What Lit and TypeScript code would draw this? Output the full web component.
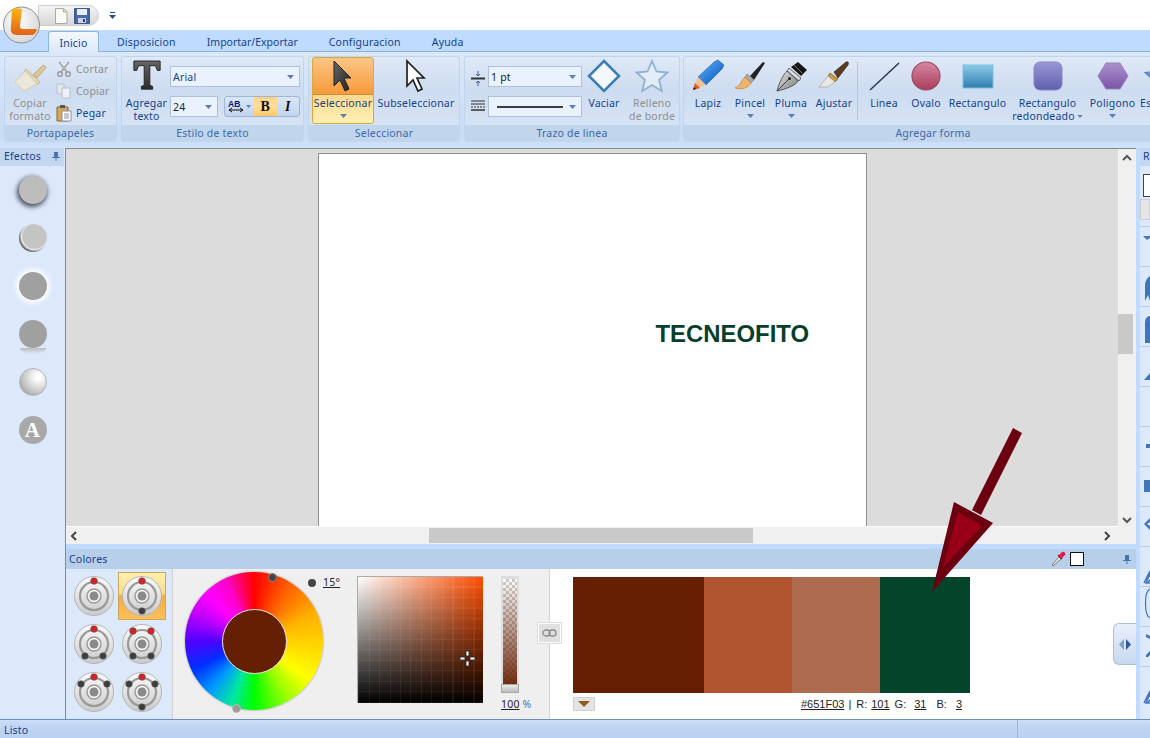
import { LitElement, html, css, svg } from "lit";
import { customElement } from "lit/decorators.js";

const caret = html`<svg class="caret" width="7" height="4" viewBox="0 0 7 4"><path d="M0 0h7L3.5 4z" fill="#5b7fb5"/></svg>`;

const icons: Record<string, any> = {
  brush: html`<svg width="36" height="36" viewBox="0 0 36 36"><path d="M21 17l9-9c2-2 5 1 3 3l-8 9z" fill="#d8c79a" stroke="#c0ab78"/><path d="M14 11l14 13-3 3-13-13z" fill="#e4d6b4" stroke="#c8b688"/><path d="M13 13L3 24c3 2 4 5 9 9l13-7z" fill="#ece7d8" stroke="#d3ccb8"/></svg>`,
  lapiz: html`<svg width="34" height="34" viewBox="0 0 34 34"><defs><linearGradient id="lp" x1="0" y1="0" x2="1" y2="1"><stop offset="0" stop-color="#6fb4f2"/><stop offset=".55" stop-color="#2a7ddb"/><stop offset="1" stop-color="#154f9e"/></linearGradient></defs><path d="M7 18L23 3l4-2 6 5-2 4-16 16z" fill="url(#lp)" stroke="#1c5cae" stroke-width=".6"/><path d="M7 18l8 8-13 5z" fill="#f3c28d"/><path d="M2 31l2-7 5 5z" fill="#e2571b"/><path d="M2 31l1-3 2 2z" fill="#222"/></svg>`,
  pincel: html`<svg width="34" height="34" viewBox="0 0 34 34"><path d="M17 17L30 3l2 1-11 17z" fill="#222"/><path d="M14 15l7 6-3 3-6-6z" fill="#aaa" stroke="#666" stroke-width=".5"/><path d="M12 18l6 6c-3 5-9 7-16 5 4-2 6-4 6-6z" fill="#eeb56c" stroke="#c47f2a" stroke-width=".7"/></svg>`,
  pluma: html`<svg width="34" height="34" viewBox="0 0 34 34"><defs><linearGradient id="nb" x1="0" y1="0" x2="1" y2="1"><stop offset="0" stop-color="#e8e8e8"/><stop offset="1" stop-color="#777"/></linearGradient></defs><path d="M17 8l7-5 9 8-6 6z" fill="#161616"/><path d="M20 6l8 8" stroke="#777" stroke-width="1"/><path d="M15 9l12 10-2 3-12-10z" fill="#d8d8d8" stroke="#333" stroke-width=".7"/><path d="M13 12l11 10c-2 4-11 8-21 10 2-8 6-16 10-20z" fill="url(#nb)" stroke="#444" stroke-width=".8"/><path d="M3 32l12-12" stroke="#222" stroke-width=".8"/><circle cx="15.500" cy="19.500" r="1.500" fill="#222"/></svg>`,
  ajustar: html`<svg width="34" height="34" viewBox="0 0 34 34"><path d="M17 13L29 3c2-1 3 1 2 3L21 19z" fill="#5a3a1e" stroke="#2f1d0d" stroke-width=".6"/><path d="M13 14l8 6-3 3-7-6z" fill="#c99b3a" stroke="#6b4d13" stroke-width=".6"/><path d="M11 17l7 6-7 5H2z" fill="#e8e8e8" stroke="#999" stroke-width=".6"/></svg>`,
  line: html`<svg width="34" height="34" viewBox="0 0 34 34"><path d="M3 31L32 4" stroke="#333b52" stroke-width="1.6"/></svg>`,
  oval: html`<svg width="32" height="32" viewBox="0 0 32 32"><defs><linearGradient id="o" x1="0" y1="0" x2="0" y2="1"><stop offset="0" stop-color="#d888a2"/><stop offset="1" stop-color="#a83d5c"/></linearGradient></defs><circle cx="16" cy="16" r="14" fill="url(#o)" stroke="#9a4a66" stroke-width="1.2"/></svg>`,
  rect: html`<svg width="34" height="34" viewBox="0 0 34 34"><defs><linearGradient id="r" x1="0" y1="0" x2="0" y2="1"><stop offset="0" stop-color="#8ccbe8"/><stop offset="1" stop-color="#2e7eae"/></linearGradient></defs><rect x="2" y="6" width="30" height="23" fill="url(#r)" stroke="#7cbde0"/></svg>`,
  rrect: html`<svg width="32" height="32" viewBox="0 0 32 32"><defs><linearGradient id="rr" x1="0" y1="0" x2="0" y2="1"><stop offset="0" stop-color="#9a96d6"/><stop offset="1" stop-color="#5f60ae"/></linearGradient></defs><rect x="2" y="2" width="28" height="28" rx="6" fill="url(#rr)" stroke="#8887c4"/></svg>`,
  poly: html`<svg width="32" height="32" viewBox="0 0 32 32"><defs><linearGradient id="p" x1="0" y1="0" x2="0" y2="1"><stop offset="0" stop-color="#ac90ce"/><stop offset="1" stop-color="#7a56a6"/></linearGradient></defs><path d="M9 3h14l8 13-8 13H9L1 16z" fill="url(#p)" stroke="#9a80c0"/></svg>`,
  esp: html`<svg class="estar" width="34" height="34" viewBox="0 0 34 34"><path d="M17 2l4.500 10.500 11 1-8.400 7.400 2.600 11L17 26l-9.700 5.900 2.600-11L1.500 13.500l11-1z" fill="#6d94c4" stroke="#5a85ba"/></svg>`,
  select: html`<svg width="24" height="36" viewBox="0 0 24 36"><defs><linearGradient id="cs" x1="0" y1="0" x2="1" y2="1"><stop offset="0" stop-color="#666"/><stop offset="1" stop-color="#222"/></linearGradient></defs><path d="M3 3v25l6-6 5 11 4-2-5-11h7z" fill="url(#cs)" stroke="#222"/></svg>`,
  subselect: html`<svg width="24" height="36" viewBox="0 0 24 36"><path d="M3 3v25l6-6 5 11 4-2-5-11h7z" fill="#fff" stroke="#222" stroke-width="1.700"/></svg>`,
  diamond: html`<svg width="34" height="34" viewBox="0 0 34 34"><path d="M17 2l15 15-15 15L2 17z" fill="#f4f8fd" stroke="#3d7eb5" stroke-width="2.6"/></svg>`,
  star: html`<svg width="34" height="34" viewBox="0 0 34 34"><path d="M17 2l4.5 10.5 11 1-8.400 7.400 2.600 11L17 26l-9.700 5.900 2.600-11L1.500 13.500l11-1z" fill="#e3edf8" stroke="#8fb0cf" stroke-width="1.800"/></svg>`,
  tbig: html`<svg width="30" height="36" viewBox="0 0 32 36"><defs><linearGradient id="t" x1="0" y1="0" x2="0" y2="1"><stop offset="0" stop-color="#666"/><stop offset="1" stop-color="#2b2b2b"/></linearGradient></defs><path d="M2 2h28v10h-3l-2-5h-6v21l3 1v3H10v-3l3-1V7H7l-2 5H2z" fill="url(#t)" stroke="#222"/></svg>`,
};

const smallIcons: Record<string, any> = {
  cut: html`<svg width="16" height="16" viewBox="0 0 16 16"><path d="M3 1l8 10M13 1L5 11" stroke="#a5a5a5" stroke-width="1.600"/><circle cx="4" cy="13" r="2.300" fill="none" stroke="#999" stroke-width="1.400"/><circle cx="12" cy="13" r="2.300" fill="none" stroke="#999" stroke-width="1.400"/></svg>`,
  copy: html`<svg width="16" height="16" viewBox="0 0 16 16"><path d="M1 1h7v10H1z" fill="#e4e8ee" stroke="#bcc2ca"/><path d="M6 5h8v10H6z" fill="#eef1f5" stroke="#bcc2ca"/></svg>`,
  paste: html`<svg width="16" height="18" viewBox="0 0 16 18"><path d="M1 3h11v14H1z" fill="#d5a75a" stroke="#8a6a2e"/><path d="M4 1h5v3H4z" fill="#555"/><path d="M6 7h9v10H6z" fill="#fff" stroke="#8a94a4"/><path d="M8 10h5M8 12h5M8 14h5" stroke="#8a94a4"/></svg>`,
};

const dial = (red: number[][], dark: number[][]) => html`<svg width="42" height="42" viewBox="0 0 42 42"><defs><linearGradient id="d" x1="0" y1="0" x2="0" y2="1"><stop offset="0" stop-color="#fbfbfb"/><stop offset="1" stop-color="#cacaca"/></linearGradient></defs><circle cx="21" cy="21" r="19.500" fill="url(#d)" stroke="#b5b5b5"/><circle cx="21" cy="21" r="14" fill="none" stroke="#999" stroke-width="2.200"/><circle cx="21" cy="21" r="7" fill="#f2f2f2" stroke="#999" stroke-width="1.400"/><circle cx="21" cy="21" r="4.500" fill="#8a8a8a"/>${red.map(([x, y]) => svg`<circle cx="${x}" cy="${y}" r="3.300" fill="#c9272c" stroke="#8e3a3a" stroke-width=".6"/>`)}${dark.map(([x, y]) => svg`<circle cx="${x}" cy="${y}" r="3.300" fill="#3d3d3d" stroke="#666" stroke-width=".6"/>`)}</svg>`;

const T = [21, 6];
const dials = [
  { red: [T], dark: [] as number[][] },
  { red: [T], dark: [[21, 36]], on: true },
  { red: [T], dark: [[12, 33], [30, 33]] },
  { red: [[12, 8], [30, 8]], dark: [[12, 33], [30, 33]] },
  { red: [T], dark: [[8, 13], [34, 13]] },
  { red: [T], dark: [[8, 13], [34, 13], [21, 36]] },
];

const shapes = [
  { k: "lapiz", t: ["Lapiz"], w: 42 },
  { k: "pincel", t: ["Pincel"], w: 42, c: true },
  { k: "pluma", t: ["Pluma"], w: 40, c: true },
  { k: "ajustar", t: ["Ajustar"], w: 46 },
  { sep: true },
  { k: "line", t: ["Linea"], w: 48 },
  { k: "oval", t: ["Ovalo"], w: 36 },
  { k: "rect", t: ["Rectangulo"], w: 67 },
  { k: "rrect", t: ["Rectangulo", "redondeado"], w: 73, i: true },
  { k: "poly", t: ["Poligono"], w: 57, c: true },
  { k: "esp", t: ["Estrella"], w: 40, l: true },
];

const rightRows = [
  svg`<path d="M3 9h7v2l-3 2z" fill="#4a7ab5"/>`,
  svg`<path d="M5 34V20c0-6 2-9 5-11v25l-2-6z" fill="#3f76b8"/>`,
  svg`<path d="M5 36V15c0-3 2-6 5-6v27z" fill="#3f76b8"/>`,
  svg`<path d="M4 33l6-7v7z" fill="#3f76b8"/>`,
  svg``,
  svg`<path d="M6 17h4v4H6z" fill="#3f76b8"/>`,
  svg`<path d="M4 13h6v12H4z" fill="#3f76b8"/>`,
  svg`<path d="M4 17l6-6v4l-3 2 3 2v4z" fill="#3f76b8"/>`,
  svg`<path d="M4 36l6-12v3l-4 9h4M8 35l2-2" fill="none" stroke="#3f76b8" stroke-width="1.500"/>`,
  svg`<path d="M10 2c-6 2-6 26 0 29" fill="none" stroke="#3f76b8" stroke-width="1.200"/>`,
  svg`<path d="M6 7l4 2v3l-4-2zM6 28l4-4v4l-2 2H6z" fill="#3f76b8"/>`,
  svg`<path d="M4 36l6-12v3l-4 9h4M8 35l2-2" fill="none" stroke="#3f76b8" stroke-width="1.500"/>`,
];

@customElement("app-root")
export class AppRoot extends LitElement {
  static styles = css`
    :host { display: block; width: 1150px; height: 738px; overflow: hidden; font-family: "Noto Sans", "Liberation Sans", sans-serif; font-size: 10.500px; letter-spacing: .2px; color: #15428b; position: relative; }
    .root { display: flex; flex-direction: column; width: 1150px; height: 738px; background: #fff; }
    .title { height: 30px; background: #fff; flex: none; display: flex; align-items: flex-start; padding: 5px 0 0 38px; box-sizing: border-box; }
    .qat { width: 61px; height: 21px; border-radius: 0 11px 11px 0; background: linear-gradient(#f4f4f4, #d6d6d6); border: 1px solid #cfcfcf; box-sizing: border-box; display: flex; align-items: center; gap: 6px; padding-left: 15px; }
    .qatmore { margin: 7px 0 0 10px; }
    .logo { position: absolute; left: 3px; top: 6px; z-index: 3; }
    .tabs { height: 22px; flex: none; background: #bfdbff; display: flex; align-items: flex-end; padding-left: 48px; box-sizing: border-box; border-bottom: 1px solid #8fb4dc; }
    .tab { height: 20px; line-height: 23px; padding: 0 15px 0 16px; white-space: nowrap; }
    .tab.imp { letter-spacing: 0; }
    .tab.on { width: 51px; box-sizing: border-box; padding: 0; text-align: center; background: linear-gradient(#f3f8fe, #dce9fa); border: 1px solid #8fb4dc; border-bottom: none; border-radius: 3px 3px 0 0; height: 21px; margin-bottom: -1px; margin-right: 2px; position: relative; }
    .ribbon { height: 96px; flex: none; box-sizing: border-box; padding: 4px 0 0 4px; display: flex; gap: 4px; background: linear-gradient(#dbe8f9, #c8dcf6 85%, #cfe2fa); overflow: hidden; }
    .group { height: 85px; flex: none; display: flex; flex-direction: column; border: 1px solid #c0d4ec; border-radius: 3px; box-sizing: border-box; background: linear-gradient(#dfe9f7, #cddcf0 40%, #d9e6f6); }
    .g1 { width: 113px; } .g2 { width: 183px; } .g3 { width: 152px; } .g4 { width: 216px; } .g5 { width: 500px; margin-left: -1px; }
    .gbody { height: 68px; display: flex; flex: none; }
    .glabel { flex: 1; background: #c1d5ec; text-align: center; line-height: 17px; color: #3e6aa8; font-size: 10.500px; }
    .big { display: flex; flex-direction: column; align-items: center; flex: none; line-height: 13px; box-sizing: border-box; }
    .big.left { align-items: flex-start; margin-left: -1px; }
    .estar { margin-left: 3px; }
    .icon { height: 37px; display: flex; align-items: center; justify-content: center; flex: none; margin-bottom: 3px; }
    .big span { white-space: nowrap; display: block; text-align: center; }
    .dis { color: #8f8f8f; }
    .caret { display: block; margin-top: 4px; }
    .inl { display: inline-block; margin: 0 0 2px 2px; }
    .b-fmt { width: 50px; }
    .col { display: flex; flex-direction: column; padding: 2px 0 0 1px; gap: 3px; }
    .sm { display: flex; align-items: center; gap: 4px; height: 19px; }
    .sm svg { flex: none; }
    .b-txt { width: 47px; margin-left: 1px; }
    .stack { display: flex; flex-direction: column; gap: 9px; padding-top: 9px; }
    .combo { height: 21px; box-sizing: border-box; border: 1px solid #abc1de; background: #eaf2fd; display: flex; align-items: center; justify-content: space-between; padding: 0 5px 0 2px; color: #15428b; font-size: 10.500px; }
    .combo .caret { margin: 0; }
    .w131 { width: 130px; }
    .w48 { width: 48px; color: #222; }
    .w94 { width: 94px; color: #222; }
    .srow { display: flex; gap: 6px; }
    .bgroup { width: 76px; height: 21px; box-sizing: border-box; border: 1px solid #9fb7d6; border-radius: 3px; display: flex; background: linear-gradient(#d9e6f6, #c2d5ee); }
    .bgroup > div { flex: 1; display: flex; align-items: center; justify-content: center; font-family: "Liberation Serif", serif; font-size: 14px; color: #111; font-weight: 700; }
    .bgroup > .ab { flex: none; width: 29px; }
    .bgroup > .on { background: linear-gradient(#fdd28a, #ffdf9c 50%, #ffc766); }
    .bgroup > .it { font-style: italic; }
    .sel-on { width: 62px; margin-left: 3px; height: 67px; border: 1px solid #d9a83c; border-radius: 3px; background: linear-gradient(#fbc684, #f79a3c 55%, #fdd98c 56%, #fff0b4); }
    .sel-on .icon { height: 36px; border-bottom: 1px solid #c5903d; width: 100%; margin-bottom: 2px; }
    .sub { width: 80px; margin-left: 2px; }
    .trazo-ic { width: 21px; flex: none; display: flex; flex-direction: column; align-items: center; gap: 14px; padding: 14px 0 0 2px; }
    .b-vac { width: 40px; margin-left: 2px; }
    .b-rel { width: 52px; margin-left: 2px; }
    .sep { width: 1px; height: 58px; margin: 5px 2px 0 0; background: #b0c6e2; flex: none; }
    .pad { width: 3px; flex: none; }
    .body { flex: 1; min-height: 0; display: flex; background: #bfdbff; }
    .side { width: 66px; flex: none; box-sizing: border-box; background: #dce9fb; border-right: 1px solid #8a8a8a; display: flex; flex-direction: column; align-items: center; }
    .sideh { width: 64px; margin-right: 1px; height: 18px; flex: none; background: #c3d7f0; display: flex; justify-content: space-between; align-items: center; padding: 0 4px 2px; box-sizing: border-box; }
    .fx { width: 28px; height: 28px; border-radius: 50%; background: #a8a8a8; margin-top: 20px; flex: none; position: relative; }
    .fx1 { background: #bdbdbd; box-shadow: -1px 2px 5px 1px #44495a; margin-top: 10px; }
    .fx2 { background: radial-gradient(circle 19px at 56% 44%, #c4c4c4 0 62%, #e8e8e8 70%, #666 82%, #333 100%); }
    .fx3 { background: #a0a0a0; box-shadow: 0 0 5px 3px #fff; }
    .fx4 { background: #a0a0a0; }
    .fx4::after { content: ""; position: absolute; left: 1px; top: 28px; width: 26px; height: 6px; border-radius: 50%/0 0 100% 100%; background: linear-gradient(#bcbcbc, #dce9fb); }
    .fx5 { background: radial-gradient(circle at 70% 30%, #fff 10%, #c5c5c5 60%, #8a8a8a); border: 1px solid #b5b5b5; box-sizing: border-box; }
    .fx6 { display: flex; align-items: center; justify-content: center; color: #fff; font: 700 21px "Liberation Serif", serif; }
    .center { width: 1070px; flex: none; display: flex; flex-direction: column; }
    .canvas { height: 396px; flex: none; display: flex; flex-direction: column; background: #f0f0f0; border-top: 1px solid #888; box-sizing: border-box; }
    .cmain { flex: 1; min-height: 0; display: flex; }
    .work { flex: 1; min-width: 0; background: #dcdcdc; display: flex; justify-content: center; overflow: hidden; padding-top: 4px; border-bottom: 1px solid #fff; }
    .page { width: 549px; height: 600px; flex: none; background: #fff; border: 1px solid #8f8f8f; box-sizing: border-box; position: relative; }
    .tecneo { position: absolute; left: 337px; top: 166px; font: 700 23.900px "Liberation Sans", sans-serif; letter-spacing: 0; color: #063f2a; white-space: nowrap; }
    .vs { width: 18px; flex: none; display: flex; flex-direction: column; align-items: center; background: #f0f0f0; box-sizing: border-box; padding: 5px 0 3px; }
    .vt { width: 15px; height: 40px; background: #c9c9c9; margin: 153px 3px 0 0; flex: none; }
    .vdown { margin-top: auto; }
    .hs { height: 17px; flex: none; display: flex; align-items: center; padding-left: 4px; }
    .ht { width: 324px; height: 15px; background: #c9c9c9; margin-left: 352px; }
    .hright { margin-left: auto; margin-right: 25px; }
    .colors { flex: 1; min-height: 0; margin-top: 5px; display: flex; flex-direction: column; position: relative; }
    .chead { height: 20px; flex: none; background: #b8cfe9; display: flex; align-items: center; padding: 0 5px 0 3px; }
    .chead .grow { flex: 1; }
    .wsq { width: 14px; height: 14px; background: #fff; border: 1px solid #111; margin: 0 39px 0 4px; box-sizing: border-box; }
    .cbody { flex: 1; min-height: 0; display: flex; }
    .dials { width: 106px; flex: none; box-sizing: border-box; background: #dce9fb; padding: 3px 0 0 4px; display: grid; grid-template-columns: 48px 48px; grid-auto-rows: 48px; }
    .dialc { display: flex; align-items: center; justify-content: center; box-sizing: border-box; }
    .dialc.on { border: 1px solid #c9a859; background: linear-gradient(#fff0b0, #fddc8a 45%, #f9a938 50%, #fbc060); }
    .wheelp { width: 378px; flex: none; box-sizing: border-box; background: #efefef; border-left: 1px solid #cfcfcf; border-right: 1px solid #d4d4d4; padding: 3px 0 0 12px; display: flex; position: relative; }
    .wheel { width: 138px; height: 138px; border-radius: 50%; flex: none; position: relative; margin-right: -15px; background: conic-gradient(#f00 0deg, #ff5a00 30deg, #ffb000 65deg, #ffd000 90deg, #ff0 125deg, #9f0 150deg, #0f0 180deg, #00e8a0 200deg, #09f 222deg, #0030ff 245deg, #5000ff 270deg, #c000ff 295deg, #f0f 315deg, #f0c 335deg, #f00 360deg); box-shadow: 0 0 2px #777; display: flex; align-items: center; justify-content: center; }
    .hole { width: 63px; height: 63px; border-radius: 50%; background: #651f03; border: 1.500px solid #e8e8e8; }
    .hnd { position: absolute; border-radius: 50%; width: 9px; height: 9px; box-sizing: border-box; background: #444; border: 1px solid #888; }
    .h1 { left: 83px; top: 1px; }
    .h2 { left: 47px; top: 132px; background: #9a9a9a; border-color: #bbb; }
    .angle { width: 49px; flex: none; display: flex; align-items: flex-start; gap: 6px; padding-top: 4px; box-sizing: border-box; color: #222; font-size: 10.500px; position: relative; }
    .angle i { width: 8px; height: 8px; border-radius: 50%; background: #444; margin-top: 3px; flex: none; }
    .angle u { line-height: 13px; padding: 0 1px; }
    .sq { width: 126px; height: 127px; flex: none; margin-top: 4px; position: relative; background-image: repeating-linear-gradient(90deg, rgba(255,255,255,.06) 0 1px, transparent 1px 10.500px), repeating-linear-gradient(0deg, rgba(255,255,255,.06) 0 1px, transparent 1px 10.500px), linear-gradient(to top, #000, rgba(0,0,0,0)), linear-gradient(to right, #fff, #ff4d00); border-top: 1px solid #aaa; border-left: 1px solid #aaa; box-sizing: border-box; }
    .cross { position: absolute; left: 101px; top: 73px; }
    .alpha { margin: 4px 0 0 18px; width: 18px; flex: none; display: flex; flex-direction: column; align-items: flex-start; }
    .atrack { width: 18px; height: 117px; box-sizing: border-box; background: linear-gradient(rgba(101,31,3,0), #651f03), repeating-conic-gradient(#ccc 0 25%, #fff 0 50%) 0 0 / 6px 6px; border-style: solid; border-width: 3px 2px 1px; border-color: #dedede; position: relative; }
    .athumb { position: absolute; left: -2px; bottom: -1px; width: 18px; height: 9px; background: linear-gradient(#ececec, #bbb); border: 1px solid #a9a9a9; box-sizing: border-box; }
    .aval { margin-top: 4px; color: #222; white-space: nowrap; font-size: 10.500px; }
    .aval b { font-weight: 400; color: #4a78ad; }
    .link { position: absolute; right: -12px; top: 54px; width: 21px; height: 18px; background: #e0e0e0; border: 1px solid #fff; outline: 1px solid #ddd; display: flex; align-items: center; justify-content: center; z-index: 2; }
    .whitep { flex: 1; background: #fff; position: relative; padding: 8px 0 0 23px; box-sizing: border-box; min-width: 0; }
    .sw { display: flex; width: 397px; height: 116px; }
    .sw div { flex: none; }
    .s1 { width: 131px; background: #651f03; } .s2 { width: 88px; background: #b0552f; } .s3 { width: 88px; background: #ae6b50; } .s4 { width: 90px; background: #04442a; }
    .foot { display: flex; width: 397px; align-items: center; justify-content: space-between; height: 14px; margin-top: 4px; color: #222; font: 11px "Liberation Sans", sans-serif; letter-spacing: 0; white-space: nowrap; }
    .dd { width: 22px; height: 14px; box-sizing: border-box; background: #e4e4e4; border: 1px solid #d0d0d0; display: flex; align-items: center; justify-content: center; }
    .info { padding-right: 8px; display: flex; }
    .m3 { margin-left: 4px; } .m5 { margin-left: 5px; } .m8 { margin-left: 8px; } .m10 { margin-left: 10px; } .m9 { margin-left: 9px; }
    .handle { position: absolute; right: 0; top: 54px; width: 23px; height: 42px; box-sizing: border-box; border: 1px solid #a9c0db; border-right: none; border-radius: 6px 0 0 6px; background: linear-gradient(#e8f0fa, #c8d9ee); display: flex; align-items: center; justify-content: center; }
    .strip { width: 4px; flex: none; }
    .right { width: 10px; flex: none; background: #dce9fb; overflow: hidden; display: flex; flex-direction: column; }
    .rh { height: 18px; background: #c3d7f0; padding: 0 0 0 3px; flex: none; line-height: 17px; }
    .rbox { width: 10px; margin: 8px 0 0 3px; height: 23px; flex: none; background: #fff; border: 1px solid #444; box-sizing: border-box; }
    .rbox2 { width: 10px; margin: 2px 0 0 0; height: 21px; flex: none; background: #e6e6e6; border: 1px solid #cfcfcf; box-sizing: border-box; }
    .rrow { height: 40px; flex: none; border-top: 1px solid #b9cde6; box-sizing: border-box; }
    .rrow svg { display: block; }
    .rfirst { margin-top: 6px; }
    .status { height: 19px; flex: none; border-top: 1px solid #6b8fbd; background: linear-gradient(#cbdff8, #c0d6f4 30%, #b8d1f2); display: flex; align-items: center; padding-left: 4px; box-sizing: border-box; justify-content: space-between; }
    .status span { padding-top: 2px; }
    .status div { height: 18px; width: 132px; border-left: 1px solid #9fb4d0; }
    .arrow { position: absolute; left: 925px; top: 425px; z-index: 5; }
  `;

  private big(k: string, lines: string[], cls: string, dis = false, car = false) {
    return html`<div class="big ${cls} ${dis ? "dis" : ""}"><div class="icon">${icons[k]}</div>${lines.map((l) => html`<span>${l}</span>`)}${car ? caret : ""}</div>`;
  }

  render() {
    return html`<div class="root">
      <svg class="logo" width="38" height="38" viewBox="0 0 38 38"><defs><radialGradient id="lg" cx=".4" cy=".35" r=".8"><stop offset="0" stop-color="#fff"/><stop offset="1" stop-color="#cfcfcf"/></radialGradient><linearGradient id="lo" x1="0" y1="0" x2="0" y2="1"><stop offset="0" stop-color="#fcb414"/><stop offset="1" stop-color="#e0621a"/></linearGradient></defs><circle cx="18.500" cy="19" r="18" fill="url(#lg)" stroke="#8a8f98" stroke-width="1"/><path d="M9 3c3-1 6-1 10 0l-2 17c0 2 1 3 3 3h14c-1 4-3 6-6 6H14C9 29 7 26 8 20z" fill="url(#lo)"/></svg>
      <div class="title">
        <div class="qat">
          <svg width="14" height="16" viewBox="0 0 14 16"><path d="M1.500 .5h8l3.500 3.500v11.500h-11.500z" fill="#fbfbf6" stroke="#a9a9a0"/><path d="M9.500 .5v3.500H13" fill="none" stroke="#a9a9a0"/></svg>
          <svg width="16" height="16" viewBox="0 0 16 16"><rect x=".7" y=".7" width="14.600" height="14.600" fill="#4a6aa8" stroke="#26407c"/><rect x="3" y="1" width="10" height="6" fill="#e6eefa"/><rect x="4" y="10" width="8" height="5" fill="#c8d3e6"/><rect x="9" y="11" width="2" height="3" fill="#26407c"/></svg>
        </div>
        <svg class="qatmore" width="7" height="8" viewBox="0 0 7 8"><path d="M1 0h5v1H1zM0 3h7L3.500 7z" fill="#24508f"/></svg>
      </div>
      <div class="tabs">
        <div class="tab on">Inicio</div><div class="tab">Disposicion</div><div class="tab imp">Importar/Exportar</div><div class="tab">Configuracion</div><div class="tab">Ayuda</div>
      </div>
      <div class="ribbon">
        <div class="group g1"><div class="gbody">
          ${this.big("brush", ["Copiar", "formato"], "b-fmt", true)}
          <div class="col">
            <div class="sm dis">${smallIcons.cut}Cortar</div>
            <div class="sm dis">${smallIcons.copy}Copiar</div>
            <div class="sm">${smallIcons.paste}Pegar</div>
          </div></div><div class="glabel">Portapapeles</div></div>
        <div class="group g2"><div class="gbody">
          ${this.big("tbig", ["Agregar", "texto"], "b-txt")}
          <div class="stack">
            <div class="combo w131">Arial ${caret}</div>
            <div class="srow"><div class="combo w48">24 ${caret}</div>
              <div class="bgroup"><div class="ab"><svg width="24" height="16" viewBox="0 0 24 16"><text x="0" y="8" font-size="8.500" font-weight="700" font-family="Liberation Sans" fill="#12127a">AB</text><path d="M1 11h14M1 11l3-2M1 11l3 2M15 11l-3-2M15 11l-3 2" stroke="#111" fill="none"/><path d="M18 6h5l-2.500 3z" fill="#5b7fb5"/></svg></div><div class="on">B</div><div class="it">I</div></div>
            </div>
          </div></div><div class="glabel">Estilo de texto</div></div>
        <div class="group g3"><div class="gbody">
          ${this.big("select", ["Seleccionar"], "sel-on", false, true)}
          ${this.big("subselect", ["Subseleccionar"], "sub")}
          </div><div class="glabel">Seleccionar</div></div>
        <div class="group g4"><div class="gbody">
          <div class="trazo-ic">
            <svg width="14" height="15" viewBox="0 0 14 15"><path d="M0 7.500h14" stroke="#333" stroke-width="2"/><path d="M7 0v5M7 10v5M5 3l2 2 2-2M5 12l2-2 2 2" stroke="#35609c" fill="none"/></svg>
            <svg width="14" height="13" viewBox="0 0 14 13"><path d="M0 1h14M0 4h14" stroke="#333" stroke-width="1.200"/><path d="M0 7h14" stroke="#333" stroke-dasharray="2 1"/><path d="M0 10h14" stroke="#333" stroke-width="1.500"/></svg>
          </div>
          <div class="stack">
            <div class="combo w94">1 pt ${caret}</div>
            <div class="combo w94"><svg width="72" height="2" viewBox="0 0 72 2"><path d="M6 1h66" stroke="#000" stroke-width="1.600"/></svg>${caret}</div>
          </div>
          ${this.big("diamond", ["Vaciar"], "b-vac")}
          ${this.big("star", ["Relleno", "de borde"], "b-rel", true)}
          </div><div class="glabel">Trazo de linea</div></div>
        <div class="group g5"><div class="gbody"><div class="pad"></div>
          ${shapes.map((s) => s.sep ? html`<div class="sep"></div>` : html`<div class="big ${s.l ? "left" : ""}" style="width:${s.w}px"><div class="icon">${icons[s.k!]}</div>${s.t!.map((l, n) => html`<span>${l}${s.i && n === 1 ? html`<svg class="inl" width="6" height="3" viewBox="0 0 7 4"><path d="M0 0h7L3.500 4z" fill="#5b7fb5"/></svg>` : ""}</span>`)}${s.c ? caret : ""}</div>`)}
          </div><div class="glabel">Agregar forma</div></div>
      </div>
      <div class="body">
        <div class="side">
          <div class="sideh">Efectos <svg width="8" height="9" viewBox="0 0 8 9"><path d="M2 0h4v5h2v1H4.500v3h-1V6H0V5h2z" fill="#4a74ad"/></svg></div>
          <div class="fx fx1"></div><div class="fx fx2"></div><div class="fx fx3"></div><div class="fx fx4"></div><div class="fx fx5"></div><div class="fx fx6">A</div>
        </div>
        <div class="center">
          <div class="canvas">
            <div class="cmain">
              <div class="work"><div class="page"><div class="tecneo">TECNEOFITO</div></div></div>
              <div class="vs">
                <svg width="10" height="7" viewBox="0 0 10 7"><path d="M1 6l4-4 4 4" fill="none" stroke="#555" stroke-width="2"/></svg>
                <div class="vt"></div>
                <svg class="vdown" width="10" height="7" viewBox="0 0 10 7"><path d="M1 1l4 4 4-4" fill="none" stroke="#555" stroke-width="2"/></svg>
              </div>
            </div>
            <div class="hs">
              <svg width="7" height="10" viewBox="0 0 7 10"><path d="M6 1L2 5l4 4" fill="none" stroke="#444" stroke-width="2"/></svg>
              <div class="ht"></div>
              <svg class="hright" width="7" height="10" viewBox="0 0 7 10"><path d="M1 1l4 4-4 4" fill="none" stroke="#444" stroke-width="2"/></svg>
            </div>
          </div>
          <div class="colors">
            <div class="chead"><span>Colores</span><span class="grow"></span>
              <svg width="16" height="16" viewBox="0 0 16 16"><path d="M2 14l7-8 2 2-8 7z" fill="#eee" stroke="#777"/><path d="M9 4l3-3c2-1 4 1 3 3l-3 3z" fill="#e8144c"/><path d="M8 4l4 4" stroke="#a01030" stroke-width="1.500"/></svg>
              <div class="wsq"></div>
              <svg width="8" height="9" viewBox="0 0 8 9"><path d="M2 0h4v5h2v1H4.500v3h-1V6H0V5h2z" fill="#4a74ad"/></svg>
            </div>
            <div class="cbody">
              <div class="dials">${dials.map((d) => html`<div class="dialc ${d.on ? "on" : ""}">${dial(d.red, d.dark)}</div>`)}</div>
              <div class="wheelp">
                <div class="wheel"><div class="hole"></div><span class="hnd h1"></span><span class="hnd h2"></span></div>
                <div class="angle"><i></i><u>15°</u></div>
                <div class="sq"><svg class="cross" width="17" height="17" viewBox="0 0 17 17"><path d="M7 1h3v5H7zM7 11h3v5H7zM1 7h5v3H1zM11 7h5v3h-5z" fill="#fff" stroke="#222" stroke-width=".8"/></svg></div>
                <div class="alpha"><div class="atrack"><div class="athumb"></div></div><div class="aval"><u>100</u> <b>%</b></div></div>
                <div class="link"><svg width="15" height="8" viewBox="0 0 15 8"><rect x="1" y="1" width="7" height="6" rx="3" fill="none" stroke="#888" stroke-width="1.300"/><rect x="7" y="1" width="7" height="6" rx="3" fill="none" stroke="#888" stroke-width="1.300"/></svg></div>
              </div>
              <div class="whitep">
                <div class="sw"><div class="s1"></div><div class="s2"></div><div class="s3"></div><div class="s4"></div></div>
                <div class="foot"><div class="dd"><svg width="12" height="6" viewBox="0 0 12 6"><path d="M0 0h12L6 6z" fill="#8a5c1e"/></svg></div>
                  <div class="info"><u>#651F03</u><span class="m3">|</span><span class="m5">R:</span><u class="m3">101</u><span class="m5">G:</span><u class="m8">31</u><span class="m10">B:</span><u class="m9">3</u></div>
                </div>
                <div class="handle"><svg width="12" height="11" viewBox="0 0 12 11"><path d="M5 0v11L0 5.500z" fill="#7f9fc4"/><path d="M7 0v11l5-5.500z" fill="#2f5a93"/></svg></div>
              </div>
            </div>
          </div>
        </div>
        <div class="strip"></div>
        <div class="right">
          <div class="rh">R</div>
          <div class="rbox"></div>
          <div class="rbox2"></div>
          ${rightRows.map((r, n) => html`<div class="rrow ${n === 0 ? "rfirst" : ""}"><svg width="10" height="39" viewBox="0 0 10 39">${r}</svg></div>`)}
        </div>
      </div>
      <div class="status"><span>Listo</span><div></div></div>
      <svg class="arrow" width="105" height="175" viewBox="925 425 105 175"><path d="M1013 428l9 5-41 82-9-5z" fill="#6b0010"/><path d="M954 502l39 21-61 69z" fill="#6b0010"/><path d="M958 512l24 14-39 41z" fill="#980018"/></svg>
    </div>`;
  }
}
